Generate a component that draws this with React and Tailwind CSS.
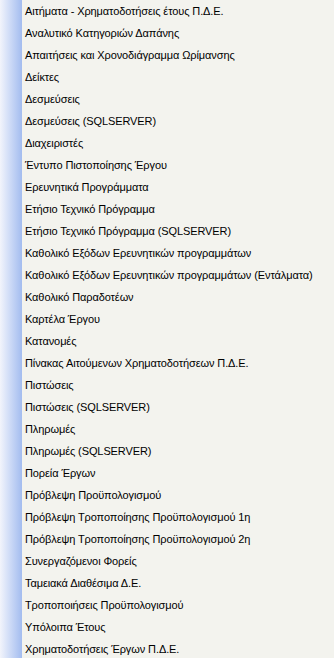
const items = [
  "Αιτήματα - Χρηματοδοτήσεις έτους Π.Δ.Ε.",
  "Αναλυτικό Κατηγοριών Δαπάνης",
  "Απαιτήσεις και Χρονοδιάγραμμα Ωρίμανσης",
  "Δείκτες",
  "Δεσμεύσεις",
  "Δεσμεύσεις (SQLSERVER)",
  "Διαχειριστές",
  "Έντυπο Πιστοποίησης Έργου",
  "Ερευνητικά Προγράμματα",
  "Ετήσιο Τεχνικό Πρόγραμμα",
  "Ετήσιο Τεχνικό Πρόγραμμα (SQLSERVER)",
  "Καθολικό Εξόδων Ερευνητικών προγραμμάτων",
  "Καθολικό Εξόδων Ερευνητικών προγραμμάτων (Εντάλματα)",
  "Καθολικό Παραδοτέων",
  "Καρτέλα Έργου",
  "Κατανομές",
  "Πίνακας Αιτούμενων Χρηματοδοτήσεων Π.Δ.Ε.",
  "Πιστώσεις",
  "Πιστώσεις (SQLSERVER)",
  "Πληρωμές",
  "Πληρωμές (SQLSERVER)",
  "Πορεία Έργων",
  "Πρόβλεψη Προϋπολογισμού",
  "Πρόβλεψη Τροποποίησης Προϋπολογισμού 1η",
  "Πρόβλεψη Τροποποίησης Προϋπολογισμού 2η",
  "Συνεργαζόμενοι Φορείς",
  "Ταμειακά Διαθέσιμα Δ.Ε.",
  "Τροποποιήσεις Προϋπολογισμού",
  "Υπόλοιπα Έτους",
  "Χρηματοδοτήσεις Έργων Π.Δ.Ε.",
];

export default function App() {
  return (
    <div className="flex h-[658px] w-[334px] overflow-hidden bg-[#f3f3ee]">
      {/* left gradient strip */}
      <div className="w-[22px] shrink-0 bg-gradient-to-r from-[#f2f4fb] to-[#a3bcef]" />
      <ul className="flex-1 min-w-0 pl-[3px] font-['Liberation_Sans',sans-serif] text-[11px] tracking-[-0.1px] text-black">
        {items.map((label) => (
          <li key={label} className="h-[22px] flex items-center whitespace-nowrap cursor-pointer">
            {label}
          </li>
        ))}
      </ul>
    </div>
  );
}
